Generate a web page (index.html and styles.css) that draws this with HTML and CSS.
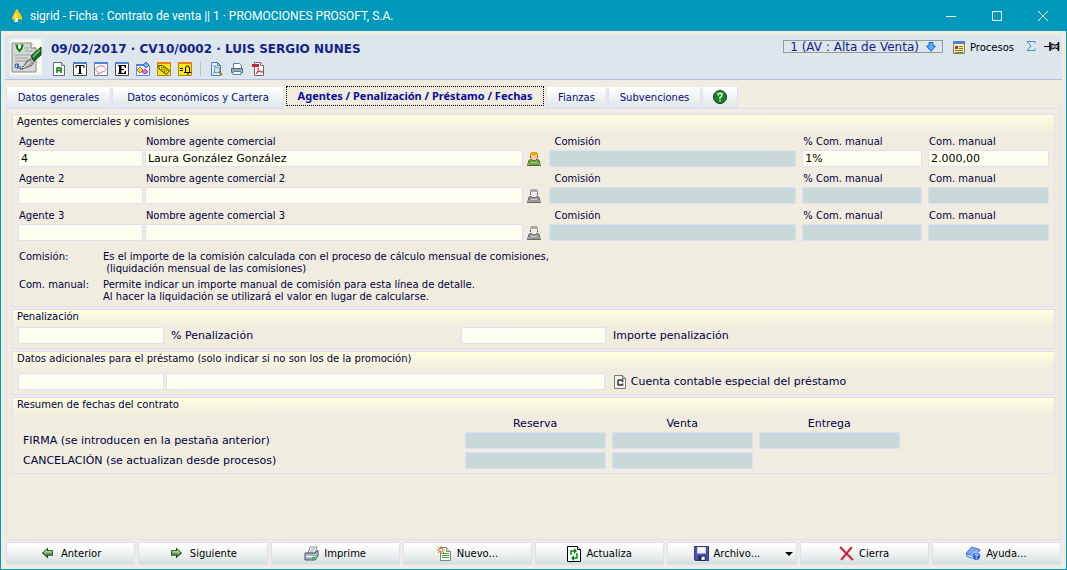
FILE: index.html
```html
<!DOCTYPE html>
<html lang="es">
<head>
<meta charset="utf-8">
<title>sigrid - Ficha : Contrato de venta</title>
<link rel="stylesheet" href="styles.css">
</head>
<body>
<svg class="defs" aria-hidden="true">
  <symbol id="person" viewBox="0 0 14 14">
    <path d="M4 0h6v1h1v5h-1v1h1l2 2v2h1v3H0v-3h1V9l2-2h1V6H3V1h1z" fill="var(--edge)"/>
    <path d="M4 0h6v1h1v3H3V1h1z" fill="var(--hair)"/>
    <path d="M4 3h6v3l-1 2H5L4 6z" fill="var(--face)"/>
    <path d="M3 8h2l1 1h2l1-1h2l1 2v3H2v-3z" fill="var(--body)"/>
    <path d="M4 10h6v1H4z" fill="var(--shine)"/>
    <path d="M0 11h2v2H0zM12 11h2v2h-2z" fill="var(--hand)"/>
  </symbol>
</svg>
<div class="window">
  <header class="titlebar">
    <svg class="app-icon" viewBox="0 0 14 16"><path d="M6 2C7 0 9 1 8 3q5 5 4 9l-4-1-5 1-1-2c1-3 2-4 4-8z" fill="#ffc90e"/><path d="M6 5L4 10l4-1z" fill="#fff27a"/><path d="M6 10l-2 4h4v-4z" fill="#e8f6ff"/></svg>
    <h1 class="title">sigrid - Ficha : Contrato de venta || 1 · PROMOCIONES PROSOFT, S.A.</h1>
    <div class="controls">
      <button class="control" aria-label="Minimizar"><svg viewBox="0 0 12 12"><path d="M1 6.500h10" /></svg></button>
      <button class="control" aria-label="Maximizar"><svg viewBox="0 0 12 12"><path d="M1.500 1.500h9v9h-9z"/></svg></button>
      <button class="control" aria-label="Cerrar"><svg viewBox="0 0 12 12"><path d="M1 1l10 10M11 1L1 11"/></svg></button>
    </div>
  </header>

  <div class="record">
    <svg class="record-icon" viewBox="0 0 34 38">
      <rect x="1" y="1" width="32" height="36" fill="#fbfaf5" stroke="#eeece6"/>
      <path d="M3 5h19l5 5v24H3z" fill="#d6d6d6" stroke="#8b8b8b"/><path d="M22 5v5h5" fill="#fff" stroke="#777"/>
      <path d="M15 10h5M16 13h8M6 17h16M6 20h13M6 23h12" stroke="#a2a2a2"/>
      <path d="M6 7h4M11 7h4" stroke="#078807"/><path d="M8 7v3l2.500 3L13 10V7" fill="#fff" stroke="#078807" stroke-width="2"/>
      <path d="M9 26q-3-1-3 2t3 1v-3 5M11 28v3h3v-3" fill="none" stroke="#1f55a0"/>
      <path d="M13 31l5-8 5-3 3 3-4 5z" fill="#aaa" stroke="#666"/><path d="M14 30l7-6" stroke="#fff"/>
      <path d="M22 18L32 9v8l-7 6z" fill="#18691f" stroke="#134416"/><path d="M24 19l7-7" stroke="#65b765" stroke-width="2"/>
    </svg>
    <div class="record-main">
      <h2 class="record-title">09/02/2017 · CV10/0002 · LUIS SERGIO NUNES</h2>
      <div class="tools">
        <button class="tool" aria-label="Documento A"><svg viewBox="0 0 14 14"><path d="M1.500.5h8l3 3v10h-11z" fill="#fff" stroke="#6a6a6a"/><path d="M9.500.5v3h3" fill="#ddd" stroke="#6a6a6a"/><path d="M5 11V6h4v5M5 8.500h4" fill="none" stroke="#067d08" stroke-width="1.500"/></svg></button>
        <button class="tool" aria-label="Texto"><svg viewBox="0 0 14 14"><path d="M.5.5h13v13H.5z" fill="#fff" stroke="#445"/><path d="M0 0h14v2H0z" fill="#4f83d8"/><path d="M3 6V3.500h8V6M5 11.500h4" fill="none" stroke="#000" stroke-width="1"/><path d="M6 4h2v8H6z"/></svg></button>
        <button class="tool" aria-label="Comentario"><svg viewBox="0 0 14 14"><path d="M.5.5h13v13H.5z" fill="#f8f8fa" stroke="#778"/><path d="M0 0h14v2H0z" fill="#4f83d8"/><path d="M4 10C0 8 2 4 7 4s7 5 1 6l-4 2z" fill="#fff" stroke="#c77c91"/></svg></button>
        <button class="tool" aria-label="Estado"><svg viewBox="0 0 14 14"><path d="M.5.5h13v13H.5z" fill="#fff" stroke="#445"/><path d="M0 0h14v2H0z" fill="#4f83d8"/><path d="M3 3h8v3h-1L9 4H6.500v3H9v1H6.500v3H9l1-2h1v3H3v-1h1V4H3z"/></svg></button>
        <button class="tool" aria-label="Etiquetas de color"><svg viewBox="0 0 14 14"><path d="M.5 3.500h13v10H.5z" fill="#eef4ff" stroke="#6485c8"/><path d="M0 2h8v2H0z" fill="#4f83d8"/><path d="M10 0l3 3-3 3-3-3z" fill="#78adff" stroke="#376ac1"/><path d="M4 5l3 3-3 3-3-3z" fill="#ffc54a" stroke="#b47621"/><path d="M9 7l3 3-3 2-3-2z" fill="#dd72e4" stroke="#9a43a2"/></svg></button>
        <button class="tool" aria-label="Etiqueta"><svg viewBox="0 0 14 14"><path d="M.5.5h13v13H.5z" fill="#ffed00" stroke="#cb7617"/><path d="M0 0h14v2H0z" fill="#e98212"/><path d="M1.500 3.500h4l7 5-3 4-7-5z" fill="#f5e900" stroke="#3d3b0b"/><path d="M4 5l6 5M6 5l5 4M4 7l5 4" stroke="#333" stroke-dasharray="1 1"/></svg></button>
        <button class="tool" aria-label="Aviso"><svg viewBox="0 0 14 14"><path d="M.5.5h13v13H.5z" fill="#ffed00" stroke="#cb7617"/><path d="M0 0h14v2H0z" fill="#e98212"/><path d="M2 6.500h3M2 8.500h3M6 10.500h7M7.500 10V6l1-2h2l1 2v4M9 12h2" fill="none" stroke="#000"/></svg></button>
        <span class="tool-separator"></span>
        <button class="tool" aria-label="Vista previa"><svg viewBox="0 0 14 14"><path d="M2.500.5h6l3 3v10h-9z" fill="#eaf5fc" stroke="#3980b8"/><path d="M8.500.5v3h3M4 4h3M4 11h2" fill="none" stroke="#3980b8"/><circle cx="8" cy="8" r="3" fill="#c9e4f0" stroke="#718ea1"/><path d="M10 10l3 3" stroke="#b76d25" stroke-width="2"/></svg></button>
        <button class="tool" aria-label="Imprimir"><svg viewBox="0 0 14 14"><path d="M3.500 6V1.500h6l2 2V6" fill="#fff" stroke="#5381ad"/><path d="M1.500 6.500h11v4h-11z" fill="#cbd4dd" stroke="#56677d"/><path d="M3 9.500h8v3H3z" fill="#f4f7fb" stroke="#5381ad"/><path d="M2 8h10" stroke="#747d89"/></svg></button>
        <button class="tool" aria-label="Exportar a PDF"><svg viewBox="0 0 14 14"><path d="M3.500.5h6l3 3v10h-9z" fill="#fff" stroke="#8a6064"/><path d="M9.500.5v3h3" fill="#fff" stroke="#8a6064"/><path d="M1 2h7v3H1z" fill="#bd2938"/><path d="M5 12c2-2 3-7 2-6-1 2 3 5 5 4-1-2-7 0-7 2z" fill="none" stroke="#ce3544"/></svg></button>
      </div>
    </div>
    <div class="record-side">
      <button class="state"><span>1 (AV : Alta de Venta)</span><svg viewBox="0 0 10 10"><path d="M3 .5h4V4h2.500L5 9.500.5 4H3z" fill="#49b3fb" stroke="#2865df"/></svg></button>
      <button class="processes"><svg viewBox="0 0 12 13"><path d="M.5.5h11v12H.5z" fill="#fff59b" stroke="#808078"/><path d="M0 0h12v3H0z" fill="#5180dc"/><path d="M2 5h3v3H2z" fill="#9b268f"/><path d="M6 5.500h4M6 7.500h4M2 9.500h8M2 11.500h8" stroke="#807c24"/></svg><span>Procesos</span></button>
      <button class="sum" aria-label="Sumatorio"><svg viewBox="0 0 10 10"><path d="M9 2.500V.5H1L5 5 1 9.500h8v-2" fill="none" stroke="#3e91b7"/></svg></button>
      <button class="pin" aria-label="Fijar"><svg viewBox="0 0 16 10"><path d="M0 5.500h6" stroke="#000"/><path d="M6 1v9M14.500 1v9" stroke="#000" stroke-width="1.500"/><path d="M7 3h2l1 1h2l1-1h1v5h-1l-1-1h-2L9 8H7z" fill="#aaa" stroke="#000"/></svg></button>
    </div>
  </div>

  <nav class="tabs" role="tablist">
    <button class="tab tab-general" role="tab">Datos generales</button>
    <button class="tab tab-economic" role="tab">Datos económicos y Cartera</button>
    <button class="tab tab-active" role="tab" aria-selected="true">Agentes / Penalización / Préstamo / Fechas</button>
    <button class="tab tab-bonds" role="tab">Fianzas</button>
    <button class="tab tab-grants" role="tab">Subvenciones</button>
    <button class="tab tab-help" role="tab" aria-label="Ayuda"><svg viewBox="0 0 14 14"><circle cx="7" cy="7" r="6.500" fill="#16802c" stroke="#0c3c16"/><path d="M3 4q4-4 8 0" fill="none" stroke="#54b568"/><path d="M5 5.500q0-2 2-2t2 1.500-2 2.500V9M7 10v1.500" fill="none" stroke="#d8ffd8" stroke-width="1.500"/></svg></button>
  </nav>

  <main class="page">
    <section class="group">
      <h3 class="legend">Agentes comerciales y comisiones</h3>
      <div class="agents">
        <div class="agent">
          <div class="field"><label for="ag1">Agente</label><input id="ag1" class="box" value="4"></div>
          <div class="field field-name"><label for="na1">Nombre agente comercial</label><div class="picker"><input id="na1" class="box" value="Laura González González"><button class="person person-set" aria-label="Ver agente"><svg><use href="#person"/></svg></button></div></div>
          <div class="field field-gap"><label for="co1">Comisión</label><input id="co1" class="box" disabled></div>
          <div class="field field-gap"><label for="pc1">% Com. manual</label><input id="pc1" class="box" value="1%"></div>
          <div class="field"><label for="cm1">Com. manual</label><input id="cm1" class="box" value="2.000,00"></div>
        </div>
        <div class="agent">
          <div class="field"><label for="ag2">Agente 2</label><input id="ag2" class="box"></div>
          <div class="field field-name"><label for="na2">Nombre agente comercial 2</label><div class="picker"><input id="na2" class="box"><button class="person" aria-label="Ver agente 2"><svg><use href="#person"/></svg></button></div></div>
          <div class="field field-gap"><label for="co2">Comisión</label><input id="co2" class="box" disabled></div>
          <div class="field field-gap"><label for="pc2">% Com. manual</label><input id="pc2" class="box" disabled></div>
          <div class="field"><label for="cm2">Com. manual</label><input id="cm2" class="box" disabled></div>
        </div>
        <div class="agent">
          <div class="field"><label for="ag3">Agente 3</label><input id="ag3" class="box"></div>
          <div class="field field-name"><label for="na3">Nombre agente comercial 3</label><div class="picker"><input id="na3" class="box"><button class="person" aria-label="Ver agente 3"><svg><use href="#person"/></svg></button></div></div>
          <div class="field field-gap"><label for="co3">Comisión</label><input id="co3" class="box" disabled></div>
          <div class="field field-gap"><label for="pc3">% Com. manual</label><input id="pc3" class="box" disabled></div>
          <div class="field"><label for="cm3">Com. manual</label><input id="cm3" class="box" disabled></div>
        </div>
      </div>
      <dl class="notes">
        <dt>Comisión:</dt><dd>Es el importe de la comisión calculada con el proceso de cálculo mensual de comisiones,<br>&nbsp;(liquidación mensual de las comisiones)</dd>
        <dt>Com. manual:</dt><dd>Permite indicar un importe manual de comisión para esta línea de detalle.<br>Al hacer la liquidación se utilizará el valor en lugar de calcularse.</dd>
      </dl>
    </section>

    <section class="group">
      <h3 class="legend">Penalización</h3>
      <div class="penalty">
        <input id="pp" class="box"><label for="pp">% Penalización</label>
        <input id="pi" class="box"><label for="pi">Importe penalización</label>
      </div>
    </section>

    <section class="group">
      <h3 class="legend">Datos adicionales para el préstamo (solo indicar si no son los de la promoción)</h3>
      <div class="loan">
        <input id="cc" class="box"><input class="box" aria-label="Descripción de la cuenta">
        <div class="account"><svg viewBox="0 0 12 14"><path d="M.5.5h8l3 3v10H.5z" fill="#f4f4ee" stroke="#777"/><path d="M8.500.5v3h3" fill="#ccc" stroke="#777"/><path d="M8.500 7V5H4.500L4 5.500v4l.5.500h4V8.500" fill="none" stroke="#333" stroke-width="1.500"/></svg><label for="cc">Cuenta contable especial del préstamo</label></div>
      </div>
    </section>

    <section class="group">
      <h3 class="legend">Resumen de fechas del contrato</h3>
      <table class="dates">
        <colgroup><col class="col-label"><col class="col-date"><col class="col-date"><col class="col-date"><col></colgroup>
        <thead><tr><td></td><th scope="col">Reserva</th><th scope="col">Venta</th><th scope="col">Entrega</th><td></td></tr></thead>
        <tbody>
          <tr><th scope="row">FIRMA (se introducen en la pestaña anterior)</th><td><input class="box" aria-label="Firma reserva" disabled></td><td><input class="box" aria-label="Firma venta" disabled></td><td><input class="box" aria-label="Firma entrega" disabled></td><td></td></tr>
          <tr><th scope="row">CANCELACIÓN (se actualizan desde procesos)</th><td><input class="box" aria-label="Cancelación reserva" disabled></td><td><input class="box" aria-label="Cancelación venta" disabled></td><td></td><td></td></tr>
        </tbody>
      </table>
    </section>
  </main>

  <footer class="actions">
    <button class="action action-arrow"><svg viewBox="0 0 14 14"><path d="M7 2.500v2h4.500v4H7v2L2.500 6.500z" fill="#63ae4c" stroke="#28452a"/><path d="M4 6.500l2-2v1h5" fill="none" stroke="#b4e19a"/></svg>Anterior</button>
    <button class="action action-arrow"><svg viewBox="0 0 14 14"><path d="M7 2.500v2H2.500v4H7v2l4.500-4z" fill="#63ae4c" stroke="#28452a"/><path d="M3 5.500h5v-1l2 2" fill="none" stroke="#b4e19a"/></svg>Siguiente</button>
    <button class="action"><svg viewBox="0 0 15 15"><path d="M4 7l2-6h7l-2 6z" fill="#fff" stroke="#8090a4"/><path d="M7 3h4M6 5h4" stroke="#90a0b5"/><path d="M1 7h10l3-3v6l-3 4H1z" fill="#a8b3c3" stroke="#4a5667"/><path d="M2 10h8v1H2z" fill="#fff"/><path d="M8 11h3v2H8z" fill="#12dc22"/></svg>Imprime</button>
    <button class="action action-new"><svg viewBox="0 0 15 15"><path d="M3.500 1.500h6l4 4v9h-10z" fill="#fff" stroke="#858585"/><path d="M9.500 1.500v4h4" fill="#ddd" stroke="#858585"/><path d="M5 7.500h7M5 9.500h7M5 11.500h7" stroke="#4aa331"/><path d="M1 1l6 6M7 1L1 7M4 0v8M0 4h8" stroke="#bf7520"/><path d="M3 3h2v2H3z" fill="#fff49b"/></svg>Nuevo...</button>
    <button class="action action-refresh"><svg viewBox="0 0 14 16"><path d="M.5.500h10l3 3v12H.5z" fill="#fff" stroke="#000"/><path d="M10.500.5v3h3" fill="#fff" stroke="#000"/><path d="M4 9V5h4M10 7v5H6" fill="none" stroke="#078a15" stroke-width="1.500"/><path d="M7 2l3 3-3 3zM7 9v6l-3-3z" fill="#078a15"/></svg>Actualiza</button>
    <button class="action action-menu"><svg viewBox="0 0 14 14"><path d="M.5.500h13v13h-12l-1-1z" fill="#4954af" stroke="#353b86"/><path d="M3 1h8v6H3z" fill="#f4f4ff"/><path d="M4 9h7v5H4z" fill="#252958"/><path d="M7 10h3v3H7z" fill="#fff"/></svg>Archivo...<span class="caret"></span></button>
    <button class="action"><svg viewBox="0 0 14 14"><path d="M1 1l12 12M12 1L2 13" stroke="#d41d3c" stroke-width="2"/></svg>Cierra</button>
    <button class="action"><svg viewBox="0 0 16 16"><path d="M0 8L6 1l9 3-6 8z" fill="#7fa9f4" stroke="#3966c5"/><path d="M0 8l9 3v3l-8-3z" fill="#dbe8ff" stroke="#3966c5"/><circle cx="11" cy="11" r="4.500" fill="#2f65d8" stroke="#dce9ff"/><path d="M9.500 10q0-1.500 1.500-1.500t1.500 1-1.500 1.500v1M11 13v1" fill="none" stroke="#fff"/></svg>Ayuda...</button>
  </footer>
</div>
</body>
</html>
```
FILE: styles.css
```css
* { box-sizing: border-box; }

body {
  margin: 0;
  color: #000040;
  font: 10px/12px "DejaVu Sans", Verdana, sans-serif;
}

button {
  margin: 0;
  padding: 0;
  border: 0;
  background: none;
  color: inherit;
  font: inherit;
}

svg { display: block; flex: none; }
h1, h2, h3, dl, dd { margin: 0; font: inherit; }
.defs { display: none; }

.window {
  display: flex;
  flex-direction: column;
  min-height: 100vh;
  border: 1px solid #0099bc;
  background: #f0ede0;
}

.titlebar {
  display: flex;
  align-items: center;
  height: 30px;
  padding-left: 9px;
  background: #0099bc;
  color: #fff;
}
.app-icon { width: 14px; height: 16px; }
.title { margin-left: 6px; font: 12px/16px Roboto, sans-serif; }
.controls { display: flex; margin-left: auto; }
.control { display: grid; place-items: center; width: 46px; height: 30px; }
.control svg { width: 12px; height: 12px; fill: none; stroke: #fff; }

.record {
  display: flex;
  margin: 4px 4px 0;
  padding: 3px 2px 3px 4px;
  border-bottom: 1px solid #b4c0e0;
  background: #dce6ec;
}
.record-icon { width: 34px; height: 38px; }
.record-main { margin: 3px 0 0 8px; }
.record-title { color: #14228c; font-weight: bold; font-size: 12px; line-height: 16px; }
.tools { display: flex; align-items: center; gap: 7px; margin-top: 4px; padding-left: 1px; }
.tool svg { width: 14px; height: 14px; }
.tool-separator { width: 1px; height: 15px; margin: 0 1px; background: #b4c0e0; }
.record-side { display: flex; align-items: flex-start; margin-left: auto; padding-top: 2px; }
.state {
  display: flex;
  align-items: center;
  gap: 7px;
  height: 13px;
  padding: 0 6px;
  border: 1px solid #999;
  color: #14228c;
  font-size: 12px;
}
.state svg { width: 10px; height: 10px; }
.processes { display: flex; align-items: center; gap: 5px; margin: 1px 0 0 10px; color: #000; }
.processes svg { width: 12px; height: 13px; }
.sum { margin: 1px 0 0 12px; }
.sum svg { width: 10px; height: 10px; }
.pin { margin: 1px 0 0 8px; }
.pin svg { width: 16px; height: 10px; }

.tabs { display: flex; align-items: flex-end; gap: 1px; margin: 6px 5px 0; }
.tab {
  display: grid;
  place-items: center;
  height: 21px;
  border: 1px solid #dedef8;
  border-top: 2px solid #fff;
  background: linear-gradient(#fdfdfd, #dfe8e8);
  color: #0a0a80;
}
.tab-general { width: 105px; }
.tab-economic { width: 172px; }
.tab-active {
  width: 258px;
  height: 20px;
  margin: 0 1px 2px;
  border: 1px dotted #000;
  background: #f0ede0;
  color: #0a0aa0;
  font: bold 11px/12px "Noto Sans", sans-serif;
}
.tab-bonds { width: 61px; }
.tab-grants { width: 93px; }
.tab-help { width: 36px; padding-bottom: 3px; }
.tab-help svg { width: 14px; height: 14px; }

.page {
  flex: 1;
  display: flex;
  flex-direction: column;
  gap: 2px;
  margin: 0 5px;
  padding: 5px;
  border: 1px solid #dedef8;
}
.group {
  border: 1px solid #dedef8;
  background: linear-gradient(#ffffdf, #f0ede0 17px);
}
.legend { height: 17px; padding: 1px 4px 0; }

.box {
  display: block;
  width: 100%;
  min-width: 0;
  height: 17px;
  padding: 0 2px;
  border: 1px solid #dedef8;
  border-radius: 1px;
  background: #fffff0;
  color: #000;
  font: 11px/15px "DejaVu Sans", Verdana, sans-serif;
}
.box:disabled { background: #c9d9d9; }

.agents { display: grid; gap: 6px; padding: 4px 5px 0; }
.agent { display: grid; grid-template-columns: 127fr 405fr 253fr 126fr 121fr; }
.field { min-width: 0; }
.field:first-child { padding-right: 2px; }
.field label { display: block; height: 14px; padding-left: 1px; }
.field-name { padding-right: 8px; }
.field-gap { padding-right: 6px; }
.field-gap label { padding-left: 5px; }
.field-gap + .field-gap label, .field-gap + .field label { padding-left: 1px; }
.picker { display: flex; align-items: center; gap: 4px; }
.person {
  --edge: #666;
  --hair: #aaa;
  --face: #eee;
  --body: #999;
  --shine: #ccc;
  --hand: #aaa;
}
.person-set {
  --edge: #586b37;
  --hair: #eea018;
  --face: #f5c995;
  --body: #64a943;
  --shine: #a0d580;
  --hand: #dc914b;
}
.person svg { width: 14px; height: 14px; }

.notes {
  display: grid;
  grid-template-columns: 84px 1fr;
  row-gap: 4px;
  padding: 10px 6px 3px;
}

.penalty, .loan, .dates { font-size: 11px; }
.penalty {
  display: grid;
  grid-template-columns: 146fr 297fr 145fr 443fr;
  align-items: center;
  padding: 0 5px 4px;
}
.penalty label { padding-left: 7px; }
.loan {
  display: grid;
  grid-template-columns: 146fr 440fr 443fr;
  column-gap: 2px;
  align-items: center;
  padding: 4px 5px;
}
.account { display: flex; align-items: center; gap: 5px; padding-left: 7px; }
.account svg { width: 12px; height: 14px; }

.dates { width: 100%; padding: 0 0 1px 5px; border-spacing: 0; table-layout: fixed; }
.dates th { padding: 0; font-weight: normal; text-align: center; }
.dates tbody th { padding-left: 5px; text-align: left; }
.dates thead th { height: 17px; padding-right: 6px; }
.dates td { padding: 0 6px 0 0; }
.dates tbody td, .dates tbody th { height: 20px; padding-bottom: 3px; }
.col-label { width: 43.1%; }
.col-date { width: 14.2%; }

.actions {
  display: grid;
  grid-template-columns: repeat(8, 1fr);
  gap: 3px;
  margin: 2px 5px 4px;
}
.action {
  display: flex;
  align-items: center;
  justify-content: center;
  gap: 5px;
  height: 23px;
  border: 1px solid #dedef8;
  background: linear-gradient(#fff, #f2f4f4 45%, #d3dede);
  color: #000;
}
.action svg { width: 15px; height: 15px; }
.action-arrow { gap: 6px; }
.action-refresh svg { width: 14px; height: 16px; }
.action-menu { position: relative; padding-right: 10px; }
.caret {
  position: absolute;
  right: 3px;
  top: 9px;
  border: 4px solid transparent;
  border-top-color: #000;
  border-bottom: 0;
}
```
